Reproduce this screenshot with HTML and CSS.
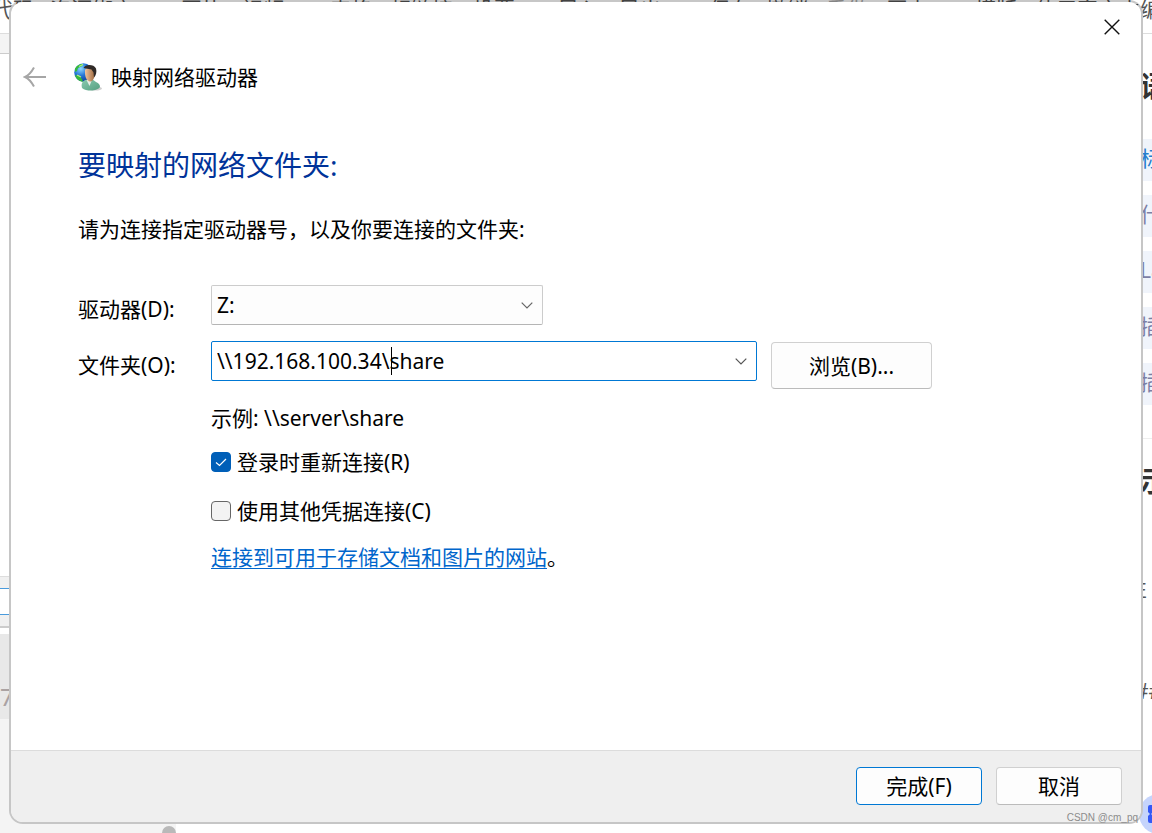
FILE: index.html
```html
<!DOCTYPE html>
<html lang="zh-CN">
<head>
<meta charset="utf-8">
<meta name="viewport" content="width=device-width, initial-scale=1">
<title>映射网络驱动器</title>
<link rel="stylesheet" href="styles.css">
</head>
<body>
<div class="editor" aria-hidden="true">
  <div class="toolbar">
    <span>代码</span><span>资源绑定</span><span>图片</span><span>视频</span><span>表格</span><span>超链接</span><span>投票</span><span>导入</span><span>导出</span><span>保存</span><span>撤销</span><span class="muted">重做</span><span>历史</span><span>模版</span><span>使用富文本编辑器</span>
  </div>
  <div class="workspace">
    <div class="source">
      <div class="tab-strip"></div>
      <div class="blank"></div>
      <div class="search-row"><div class="search-box"></div></div>
      <div class="line-number">7</div>
      <div class="scroll-area"><div class="thumb"></div></div>
    </div>
    <div class="help">
      <div class="help-title">语法说明</div>
      <div class="pill active">标题</div>
      <div class="pill">什么</div>
      <div class="pill">LaTeX</div>
      <div class="pill">插入</div>
      <div class="pill">插图</div>
      <div class="help-title sample">示例</div>
      <div class="help-text">性</div>
      <div class="help-text hashes">##</div>
    </div>
  </div>
  <svg class="assistant" viewBox="0 0 40 40"><circle cx="20" cy="20" r="20" fill="#c5d4fc"/><path d="M9 13q0-2 2-2h4v6l-3 3 3 3v6h-4q-2 0-2-2v-5l2-2-2-2z" fill="#3458f5"/></svg>
</div>

<main class="dialog" role="dialog" aria-labelledby="dialog-title">
  <header class="titlebar">
    <button class="icon-button" type="button" aria-label="关闭">
      <svg width="16" height="16" viewBox="0 0 16 16"><path d="M.7.7l14.6 14.6M15.3.7L.7 15.3" fill="none" stroke="#111" stroke-width="1.4"/></svg>
    </button>
  </header>
  <div class="wizard-bar">
    <button class="icon-button" type="button" aria-label="返回" disabled>
      <svg width="24" height="22" viewBox="0 0 24 22"><path d="M23 11H2M11 1.500C8.500 6 5.500 9.500 2 11c3.500 1.500 6.500 5 9 9.500" fill="none" stroke="#a6a6a6" stroke-width="2"/></svg>
    </button>
    <svg class="drive-icon" width="28" height="28" viewBox="0 0 28 28">
      <defs>
        <radialGradient id="sea" cx=".35" cy=".3" r=".8"><stop offset="0" stop-color="#8fd8ff"/><stop offset=".45" stop-color="#2678d8"/><stop offset="1" stop-color="#0b318e"/></radialGradient>
        <linearGradient id="skin" x1="0" x2="1"><stop offset="0" stop-color="#f1c49c"/><stop offset="1" stop-color="#9d683f"/></linearGradient>
        <linearGradient id="shirt" x1="0" x2="1" y2="1"><stop offset="0" stop-color="#8bcbb1"/><stop offset="1" stop-color="#559f80"/></linearGradient>
      </defs>
      <circle cx="9.500" cy="9.500" r="9.300" fill="url(#sea)"/>
      <path d="M1 5.500C3 2 6.500.5 9 1L8 3 4 5 3 8 1 9zM1 12l4 1 3 3 1 3C5 18 2 16 1 12z" fill="#36b83c"/>
      <path d="M5 3.500l4-2M3 12l4 2" stroke="#b8f47c" stroke-width="1.200"/>
      <ellipse cx="21" cy="25.500" rx="7" ry="2" fill="#777" opacity=".35"/>
      <path d="M8 25c-1-4 0-6 3-8l7-1 4 3c3 1 4 3 4 5-2 4-13 5-18 1z" fill="url(#shirt)"/>
      <path d="M12.500 17l4-1 1 2-2 5z" fill="#e8eee8"/>
      <path d="M11 7c1-3 10-4 10 2 0 5-2 10-5 9.500-3-.5-5-4-5-9z" fill="url(#skin)"/>
      <path d="M9.500 5C11 1 20 1 22 5.500c1 3 0 7-2 9l-.5-5-2-3z" fill="#302a27"/>
    </svg>
    <span id="dialog-title" class="dialog-name">映射网络驱动器</span>
  </div>
  <form class="content">
    <h1>要映射的网络文件夹:</h1>
    <p class="intro">请为连接指定驱动器号，以及你要连接的文件夹:</p>
    <div class="fields">
      <label for="drive">驱动器(D):</label>
      <div class="combo drive">
        <select id="drive"><option>Z:</option></select>
        <svg class="chevron" width="12" height="7" viewBox="0 0 12 7"><path d="M.7.7L6 6 11.300.7" fill="none" stroke="#666" stroke-width="1.200"/></svg>
      </div>
      <label for="folder">文件夹(O):</label>
      <div class="folder-row">
        <div class="combo folder">
          <input id="folder" type="text" value="\\192.168.100.34\share">
          <span class="caret"></span>
          <svg class="chevron" width="12" height="7" viewBox="0 0 12 7"><path d="M.7.7L6 6 11.300.7" fill="none" stroke="#555" stroke-width="1.200"/></svg>
        </div>
        <button class="button browse" type="button">浏览(B)...</button>
      </div>
      <div class="options">
        <p class="example">示例: \\server\share</p>
        <label class="check"><input type="checkbox" checked><svg class="tick" width="20" height="20" viewBox="0 0 20 20"><path d="M5 10.500l3.500 3L15 7" fill="none" stroke="#fff" stroke-width="1.200"/></svg>登录时重新连接(R)</label>
        <label class="check"><input type="checkbox">使用其他凭据连接(C)</label>
        <p class="site"><a href="#">连接到可用于存储文档和图片的网站</a>。</p>
      </div>
    </div>
  </form>
  <footer class="actions">
    <button class="button primary" type="submit">完成(F)</button>
    <button class="button" type="button">取消</button>
  </footer>
</main>
<div class="watermark">CSDN @cm_pq</div>
</body>
</html>
```
FILE: styles.css
```css
* { box-sizing: border-box; }

body {
  position: relative;
  display: flex;
  min-height: 100vh;
  margin: 0;
  padding: 0 9px 9px;
  overflow: hidden;
  background: #fff;
  color: #000;
  font: 21px/28px "Noto Sans", "Noto Sans CJK SC", sans-serif;
}

p, h1 { margin: 0; }
button, input, select { font: inherit; color: inherit; }

/* Editor behind the dialog */
.editor {
  position: absolute;
  inset: 0;
  display: flex;
  flex-direction: column;
  overflow: hidden;
  color: #555;
}

.toolbar {
  display: grid;
  grid-template-columns: 58px 131px 61px 88px 60px 83px 85px 61px 90px 57px 60px 60px 89px 60px 180px;
  flex: none;
  height: 34px;
  margin-left: -8px;
  border-bottom: 1px solid #ddd;
  line-height: 18px;
  white-space: nowrap;
}

.toolbar .muted { color: #aaa; }

.workspace { display: flex; flex: 1; justify-content: space-between; }

.source { display: flex; flex-direction: column; width: 176px; }
.tab-strip { height: 20px; background: #f4f4f4; border-bottom: 1px solid #ccc; }
.blank { height: 522px; }
.search-row {
  height: 52px;
  padding: 11px 0;
  border-top: 1px solid #ddd;
  border-bottom: 2px solid #ccc;
  background: #f0f0f0;
}
.search-box { height: 27px; border: 1px solid #4a9bdc; border-width: 1px 0; background: #fff; }
.line-number {
  height: 85px;
  margin-top: 6px;
  padding-top: 49px;
  background: #e8e8e8;
  color: #aaa2a2;
  font-size: 24px;
}
.scroll-area { display: flex; flex: 1; align-items: flex-end; justify-content: flex-end; background: #f4f4f4; }
.thumb { width: 14px; height: 7px; border-radius: 7px 7px 0 0; background: #b9b9b9; }

.help { width: 12px; white-space: nowrap; }
.help-title { height: 84px; margin: 36px 0 21px; color: #333; font-size: 28px; font-weight: 700; line-height: 32px; }
.help-title:first-child { height: 48px; }
.pill { height: 42px; margin-bottom: 14px; background: #f0f4fb; color: #7c7fa5; line-height: 38px; }
.pill.active { color: #267dcc; }
.help-title.sample { margin: 33px 0 52px; padding-top: 26px; border-top: 1px solid #eee; }
.help-text { height: 103px; margin-left: -14px; }
.help-text.hashes { margin-left: -5px; }
.assistant { position: absolute; right: -27px; bottom: -1px; width: 40px; height: 40px; }

/* Dialog window */
.dialog {
  position: relative;
  display: flex;
  flex: 1;
  flex-direction: column;
  border: 2px solid #c6c6c6;
  border-top-color: #00000038;
  border-radius: 14px;
  background: #fff;
  background-clip: padding-box;
}

.titlebar { display: flex; justify-content: flex-end; padding: 17px 21px 0 0; }
.icon-button { display: flex; padding: 0; border: 0; background: none; }

.wizard-bar { display: flex; align-items: center; padding: 28px 12px 0; }
.drive-icon { margin: 0 9px 0 27px; }

.content { flex: 1; padding: 56px 67px 24px; }
.content h1 { color: #039; font-size: 28px; font-weight: 400; line-height: 36px; }
.intro { margin-top: 32px; }

.fields {
  display: grid;
  grid-template-columns: 133px 1fr;
  row-gap: 16px;
  margin-top: 42px;
}
.fields > label { padding-top: 10px; }

.combo {
  position: relative;
  display: flex;
  height: 40px;
  border: 1px solid #ccc;
  border-radius: 2px;
  background: #fdfdfd;
}
.combo select, .combo input {
  width: 100%;
  padding: 0 5px;
  border: 0;
  outline: 0;
  background: none;
  appearance: none;
}
.chevron { position: absolute; top: 16px; right: 9px; pointer-events: none; }
.drive { width: 332px; border-bottom-color: #b5b5b5; }
.folder-row { display: flex; align-items: flex-start; gap: 14px; }
.folder { flex: 0 1 546px; border-color: #0078d4; background: #fff; }
.caret { position: absolute; top: 5px; left: 179px; width: 1px; height: 28px; background: #000; }

.button {
  width: 126px;
  height: 38px;
  padding: 0;
  border: 1px solid #d0d0d0;
  border-bottom-color: #bbb;
  border-radius: 4px;
  background: #fdfdfd;
}
.browse { width: 161px; height: 47px; margin-top: 1px; }
.primary { border-color: #0078d4; }

.options {
  display: flex;
  flex-direction: column;
  grid-column: 2;
  align-items: flex-start;
  margin-top: -1px;
}
.check { position: relative; display: flex; align-items: center; gap: 6px; margin-top: 16px; }
.check + .check { margin-top: 21px; }
.check input {
  width: 20px;
  height: 20px;
  margin: 0;
  border: 1px solid #666;
  border-radius: 4px;
  background: #f3f3f3;
  appearance: none;
}
.check input:checked { border-color: #005fb8; background: #005fb8; }
.tick { position: absolute; top: 4px; left: 0; pointer-events: none; }
.site { margin-top: 18px; }
.site a { color: #0066cc; text-decoration-thickness: 1px; text-underline-offset: 3px; }

.actions {
  display: flex;
  justify-content: flex-end;
  gap: 14px;
  padding: 16px 19px 17px;
  border-top: 1px solid #dcdcdc;
  border-radius: 0 0 12px 12px;
  background: #efefef;
}

.watermark {
  position: absolute;
  right: 14px;
  bottom: 8px;
  color: #8c8c8c;
  font: 10px/14px "Liberation Sans", sans-serif;
}
```
